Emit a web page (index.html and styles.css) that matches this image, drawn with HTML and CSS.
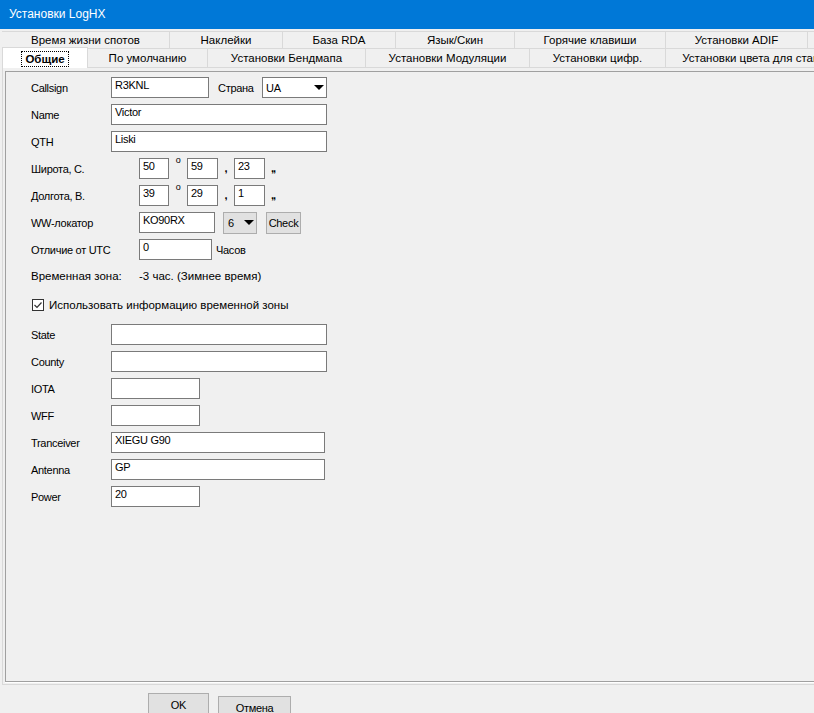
FILE: index.html
```html
<!DOCTYPE html>
<html lang="ru">
<head>
    <meta charset="UTF-8">
    <meta name="viewport" content="width=device-width, initial-scale=1.0">
    <title>Установки LogHX</title>
    <link rel="stylesheet" href="styles.css">
</head>
<body>
    <div class="window">
        <div class="titlebar">Установки LogHX</div>

        <div class="pages">
            <!-- задний ряд вкладок -->
            <div class="tab-row tab-row-back">
                <div class="tab t-spots">Время жизни спотов</div>
                <div class="tab t-labels">Наклейки</div>
                <div class="tab t-rda">База RDA</div>
                <div class="tab t-lang">Язык/Скин</div>
                <div class="tab t-hotkeys">Горячие клавиши</div>
                <div class="tab t-adif">Установки ADIF</div>
                <div class="tab t-rest"></div>
            </div>
            <!-- передний ряд вкладок -->
            <div class="tab-row tab-row-front">
                <div class="tab tab-active t-general"><span class="focus">Общие</span></div>
                <div class="tab t-default">По умолчанию</div>
                <div class="tab t-bandmap">Установки Бендмапа</div>
                <div class="tab t-modulation">Установки Модуляции</div>
                <div class="tab t-digital">Установки цифр.</div>
                <div class="tab t-colors">Установки цвета для станций</div>
            </div>

            <div class="sheet">
                <div class="panel">
                    <div class="row">
                        <div class="label">Callsign</div>
                        <div class="edit edit-call">R3KNL</div>
                        <div class="label label-country">Страна</div>
                        <div class="select">
                            <span>UA</span>
                            <span class="arrow"></span>
                        </div>
                    </div>
                    <div class="row">
                        <div class="label">Name</div>
                        <div class="edit edit-long">Victor</div>
                    </div>
                    <div class="row">
                        <div class="label">QTH</div>
                        <div class="edit edit-long">Liski</div>
                    </div>
                    <div class="row">
                        <div class="label label-wide">Широта, С.</div>
                        <div class="edit edit-deg">50</div>
                        <div class="sep sep-deg"><span class="deg">o</span></div>
                        <div class="edit edit-min">59</div>
                        <div class="sep sep-min">,</div>
                        <div class="edit edit-min">23</div>
                        <div class="sep sep-sec">,,</div>
                    </div>
                    <div class="row">
                        <div class="label label-wide">Долгота, В.</div>
                        <div class="edit edit-deg">39</div>
                        <div class="sep sep-deg"><span class="deg">o</span></div>
                        <div class="edit edit-min">29</div>
                        <div class="sep sep-min">,</div>
                        <div class="edit edit-min">1</div>
                        <div class="sep sep-sec">,,</div>
                    </div>
                    <div class="row">
                        <div class="label label-wide">WW-локатор</div>
                        <div class="edit edit-loc">KO90RX</div>
                        <div class="combo">
                            <span>6</span>
                            <span class="arrow"></span>
                        </div>
                        <div class="btn btn-check">Check</div>
                    </div>
                    <div class="row">
                        <div class="label label-wide">Отличие от UTC</div>
                        <div class="edit edit-utc">0</div>
                        <div class="label label-hours">Часов</div>
                    </div>
                    <div class="row row-tz">
                        <div class="ui-text tz-name">Временная зона:</div>
                        <div class="ui-text">-3 час. (Зимнее время)</div>
                    </div>
                    <div class="row row-check">
                        <svg class="checkbox" width="12" height="12" viewBox="0 0 12 12">
                            <rect x="0.5" y="0.5" width="11" height="11" fill="#fff" stroke="#333"/>
                            <path d="M2.5 6 L5 8.5 L9.5 3.5" fill="none" stroke="#333" stroke-width="1.2"/>
                        </svg>
                        <div class="ui-text">Использовать информацию временной зоны</div>
                    </div>
                    <div class="row row-state">
                        <div class="label">State</div>
                        <div class="edit edit-long"></div>
                    </div>
                    <div class="row">
                        <div class="label">County</div>
                        <div class="edit edit-long"></div>
                    </div>
                    <div class="row">
                        <div class="label">IOTA</div>
                        <div class="edit edit-short"></div>
                    </div>
                    <div class="row">
                        <div class="label">WFF</div>
                        <div class="edit edit-short"></div>
                    </div>
                    <div class="row">
                        <div class="label">Tranceiver</div>
                        <div class="edit edit-mid">XIEGU G90</div>
                    </div>
                    <div class="row">
                        <div class="label">Antenna</div>
                        <div class="edit edit-mid">GP</div>
                    </div>
                    <div class="row">
                        <div class="label">Power</div>
                        <div class="edit edit-short">20</div>
                    </div>
                </div>
            </div>
        </div>

        <div class="buttons">
            <div class="btn btn-ok">OK</div>
            <div class="btn btn-cancel">Отмена</div>
        </div>
    </div>
</body>
</html>
```

FILE: styles.css
```css
body {
    margin: 0;
    background: #f0f0f0;
    font-family: "Liberation Sans", Arial, sans-serif;
    color: #000;
}
.window {
    width: 814px;
    height: 713px;
    overflow: hidden;
}
.titlebar {
    height: 29px;
    line-height: 29px;
    padding-left: 9px;
    background: #0078d7;
    color: #fff;
    font-size: 12px;
}

/* вкладки */
.pages {
    margin-top: 2px;
    margin-left: 2px;
}
.tab-row {
    display: flex;
    white-space: nowrap;
    font-size: 11.5px;
}
.tab-row-back {
    height: 17px;
}
.tab-row-front {
    height: 19px;
}
.tab {
    flex: none;
    box-sizing: border-box;
    text-align: center;
    overflow: hidden;
    border-top: 1px solid #d9d9d9;
    border-right: 1px solid #d9d9d9;
}
.tab-row-back .tab {
    height: 17px;
    line-height: 16px;
}
.tab-row-front .tab {
    height: 19px;
    line-height: 18px;
}
.tab-row-front .tab-active {
    position: relative;
    z-index: 1;
    height: 21px;
    margin-top: -1px;
    line-height: 20px;
    background: #fff;
    border-left: 1px solid #d9d9d9;
    font-weight: bold;
}
.focus {
    display: inline-block;
    line-height: 14px;
    padding: 0 3px;
    border: 1px dotted #000;
    vertical-align: middle;
}
.t-spots { width: 168px; }
.t-labels { width: 113px; }
.t-rda { width: 113px; }
.t-lang { width: 119px; }
.t-hotkeys { width: 151px; }
.t-adif { width: 142px; }
.t-rest { width: 40px; }
.t-general { width: 86px; }
.t-default { width: 120px; }
.t-bandmap { width: 158px; }
.t-modulation { width: 164px; }
.t-digital { width: 136px; }
.t-colors { width: 190px; }

/* страница */
.sheet {
    border: 1px solid #d9d9d9;
    border-right: none;
    padding: 3px 0 2px 2px;
}
.panel {
    box-sizing: border-box;
    height: 611px;
    padding: 5px 0 0 25px;
    border-top: 1px solid #a0a0a0;
    border-left: 1px solid #a0a0a0;
    border-bottom: 1px solid #a0a0a0;
    box-shadow: 0 1px 0 #fff;
}

/* строки формы */
.row {
    display: flex;
    align-items: center;
    height: 21px;
    margin-top: 6px;
}
.row:first-child {
    margin-top: 0;
}
.row-tz {
    margin-top: 5px;
}
.row-check {
    margin-top: 8px;
}
.row-state {
    margin-top: 9px;
}
.label,
.edit,
.select,
.combo,
.btn,
.sep {
    font-size: 11px;
    letter-spacing: -0.3px;
    white-space: nowrap;
}
.label {
    flex: none;
    width: 80px;
}
.label-wide {
    width: 108px;
}
.label-country {
    width: 44px;
    margin-left: 9px;
}
.label-hours {
    width: auto;
    margin-left: 4px;
}
.ui-text {
    font-size: 11.5px;
    white-space: nowrap;
}
.tz-name {
    width: 108px;
}
.edit {
    flex: none;
    box-sizing: border-box;
    height: 21px;
    padding: 0 3px;
    line-height: 15px;
    background: #fff;
    border: 1px solid #7a7a7a;
    overflow: hidden;
}
.edit-call { width: 98px; }
.edit-long { width: 216px; }
.edit-mid { width: 214px; }
.edit-short { width: 89px; }
.edit-deg { width: 30px; }
.edit-min { width: 31px; }
.edit-loc { width: 76px; }
.edit-utc { width: 73px; }
.sep {
    flex: none;
    text-align: center;
    font-weight: bold;
    line-height: 21px;
    align-self: stretch;
}
.sep-deg {
    width: 18px;
    font-weight: normal;
}
.deg {
    display: block;
    font-size: 9px;
    line-height: 9px;
    margin-top: -2px;
}
.sep-min {
    width: 16px;
}
.sep-sec {
    margin-left: 6px;
    letter-spacing: -1px;
}
.select,
.combo {
    flex: none;
    display: flex;
    align-items: center;
    justify-content: space-between;
    box-sizing: border-box;
}
.select {
    width: 65px;
    height: 21px;
    padding: 0 2px 0 3px;
    background: #fff;
    border: 1px solid #7a7a7a;
}
.combo {
    width: 34px;
    height: 22px;
    margin-left: 8px;
    padding: 0 2px 0 4px;
    background: #e1e1e1;
    border: 1px solid #adadad;
}
.arrow {
    width: 0;
    height: 0;
    border-left: 5px solid transparent;
    border-right: 5px solid transparent;
    border-top: 5px solid #000;
}
.btn {
    flex: none;
    box-sizing: border-box;
    text-align: center;
    background: #e1e1e1;
    border: 1px solid #adadad;
}
.btn-check {
    width: 35px;
    height: 22px;
    line-height: 20px;
    margin-left: 9px;
}
.checkbox {
    flex: none;
    margin-left: 1px;
    margin-right: 5px;
}

/* кнопки внизу */
.buttons {
    display: flex;
    align-items: flex-start;
    padding: 8px 0 0 148px;
}
.btn-ok,
.btn-cancel {
    height: 25px;
    line-height: 23px;
}
.btn-ok {
    width: 61px;
}
.btn-cancel {
    width: 73px;
    margin-top: 3px;
    margin-left: 9px;
}
```
